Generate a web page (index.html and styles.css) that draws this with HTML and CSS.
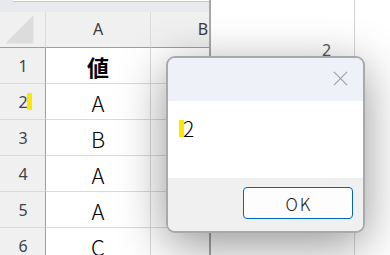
FILE: index.html
```html
<!DOCTYPE html>
<html lang="ja">
<head>
<meta charset="utf-8">
<link rel="stylesheet" href="styles.css">
</head>
<body>
<div class="screen">
  <div class="sheet">
    <div class="topband"><div class="formula"></div></div>
    <div class="grid">
      <div class="corner"><div class="tri"></div></div>
      <div class="colhead">A</div>
      <div class="colhead">B</div>

      <div class="rowhead">1</div>
      <div class="cell bold">値</div>
      <div class="cell"></div>

      <div class="rowhead">2<span class="mark rmark"></span></div>
      <div class="cell">A</div>
      <div class="cell"></div>

      <div class="rowhead">3</div>
      <div class="cell">B</div>
      <div class="cell"></div>

      <div class="rowhead">4</div>
      <div class="cell">A</div>
      <div class="cell"></div>

      <div class="rowhead">5</div>
      <div class="cell">A</div>
      <div class="cell"></div>

      <div class="rowhead">6</div>
      <div class="cell">C</div>
      <div class="cell"></div>
    </div>
  </div>
  <div class="right">
    <div class="pane1"><span class="val">2</span></div>
    <div class="pane2"></div>
  </div>

  <div class="dialog">
    <div class="dtitle">
      <svg class="close" width="16" height="16" viewBox="0 0 16 16"><path d="M1 1L15 15M15 1L1 15" stroke="#a3a3a3" stroke-width="1.3" fill="none"/></svg>
    </div>
    <div class="dbody"><span class="mark dmark"></span><span class="dtext">2</span></div>
    <div class="dfoot"><button class="ok">OK</button></div>
  </div>
</div>
</body>
</html>
```
FILE: styles.css
```css
html, body {
  margin: 0;
  padding: 0;
}
body {
  width: 390px;
  height: 255px;
  overflow: hidden;
  background: #ffffff;
}
.screen {
  position: relative;
  display: flex;
  width: 390px;
  height: 255px;
  overflow: hidden;
}
.sheet {
  width: 209px;
  flex: none;
  overflow: hidden;
  border-right: 2px solid #a8a8a8;
  background: #ffffff;
}
.topband {
  height: 12px;
  background: #e7e9ec;
  box-sizing: border-box;
}
.formula {
  margin-left: 13px;
  height: 1px;
  background: #ffffff;
  border-bottom: 1px solid #c9c9c9;
}
.grid {
  display: grid;
  grid-template-columns: 46px 105px 105px;
  grid-auto-rows: 36px;
  width: 256px;
}
.grid > div {
  box-sizing: border-box;
  display: flex;
  align-items: center;
  justify-content: center;
}
.corner {
  background: #f0f0f0;
  border-right: 1px solid #dcdcdc;
  border-bottom: 1px solid #9f9f9f;
  position: relative;
}
.tri {
  width: 28px;
  height: 28px;
  background: #dcdcdc;
  clip-path: polygon(100% 0, 100% 100%, 0 100%);
  margin-left: -6px;
}
.colhead {
  background: #f0f0f0;
  border-right: 1px solid #dcdcdc;
  border-bottom: 1px solid #9f9f9f;
  font-family: "Noto Sans", sans-serif;
  font-size: 16px;
  color: #3a3a3a;
  padding-bottom: 2px;
}
.rowhead {
  background: #f0f0f0;
  border-right: 1px solid #9f9f9f;
  border-bottom: 1px solid #d8d8d8;
  font-family: "Noto Sans", sans-serif;
  font-size: 16px;
  color: #3c4450;
  position: relative;
  padding-left: 1px;
}
.cell {
  border-right: 1px solid #dadada;
  border-bottom: 1px solid #dadada;
  font-family: "Noto Sans CJK JP", "Noto Sans", sans-serif;
  font-size: 22px;
  font-weight: 300;
  color: #000000;
  background: #ffffff;
}
.cell.bold {
  font-weight: 700;
}
.mark {
  display: inline-block;
  background: #ffe600;
}
.rmark {
  position: absolute;
  left: 27px;
  top: 9px;
  width: 5px;
  height: 17px;
}
.right {
  flex: 1;
  display: flex;
  background: #ffffff;
}
.pane1 {
  width: 143px;
  flex: none;
  border-right: 1px solid #d4d4d4;
  position: relative;
}
.val {
  position: absolute;
  left: 111px;
  top: 39px;
  font-family: "Noto Sans", sans-serif;
  font-size: 16px;
  color: #555555;
}
.pane2 {
  flex: 1;
}
.dialog {
  position: absolute;
  left: 166px;
  top: 56px;
  width: 199px;
  height: 177px;
  box-sizing: border-box;
  border: 2px solid #a9a9a9;
  border-radius: 9px;
  overflow: hidden;
  display: flex;
  flex-direction: column;
  background: #f0f0f0;
  box-shadow: 0 12px 48px rgba(0, 0, 0, 0.42);
}
.dtitle {
  height: 43px;
  flex: none;
  background: #eff1f8;
  display: flex;
  justify-content: flex-end;
  align-items: flex-start;
}
.close {
  margin-top: 13px;
  margin-right: 15px;
  width: 15px;
  height: 15px;
}
.dbody {
  height: 77px;
  flex: none;
  background: #ffffff;
  display: flex;
  align-items: flex-start;
  padding-left: 11px;
  box-sizing: border-box;
  padding-top: 17px;
  position: relative;
}
.dmark {
  width: 5px;
  height: 17px;
  margin-top: 2px;
}
.dtext {
  font-family: "Noto Sans CJK JP", "Noto Sans", sans-serif;
  font-size: 21px;
  font-weight: 300;
  line-height: 21px;
  color: #000000;
  margin-left: -1px;
}
.dfoot {
  flex: 1;
  background: #f0f0f0;
  display: flex;
  justify-content: flex-end;
  align-items: flex-start;
  padding-top: 9px;
  padding-right: 10px;
}
.ok {
  width: 110px;
  height: 32px;
  box-sizing: border-box;
  border: 1px solid #0067c0;
  border-radius: 4px;
  background: #fdfdfd;
  font-family: "Noto Sans CJK JP", "Noto Sans", sans-serif;
  font-size: 17px;
  font-weight: 300;
  letter-spacing: 2px;
  color: #1a1a1a;
  padding: 0 0 0 2px;
  margin: 0;
}
```
